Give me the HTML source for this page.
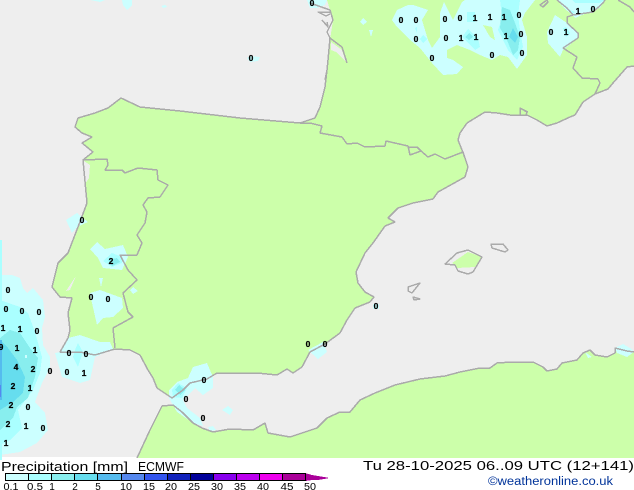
<!DOCTYPE html>
<html>
<head>
<meta charset="utf-8">
<style>
html,body{margin:0;padding:0;background:#fff;width:634px;height:490px;overflow:hidden}
svg{display:block;position:absolute;left:0;top:0}
.d text{font-family:"Liberation Sans",sans-serif;font-size:8.5px;font-weight:bold;fill:#000;text-anchor:middle;stroke:#000;stroke-width:.25px}
.l text{font-family:"Liberation Sans",sans-serif;font-size:10px;fill:#000;text-anchor:middle}
.t{font-family:"Liberation Sans",sans-serif;font-size:12.5px;fill:#000}
</style>
</head>
<body>
<svg width="634" height="490" viewBox="0 0 634 490" xmlns="http://www.w3.org/2000/svg">
<rect x="0" y="0" width="634" height="457" fill="#eeeeee"/>
<g shape-rendering="crispEdges">
<!-- land -->
<path fill="#ccffaa" d="M327 0L634 0L634 66L627 67L620 75L613 83L608 89L595 94L583 102L575 115L570 117L557 123L547 126L537 120L531 117L527 115L520 115L510 115L497 113L485 112L467 123L460 133L458 140L462 150L465 158L468 167L465 177L447 187L438 192L433 199L413 203L398 208L388 218L395 222L385 226L373 243L365 253L356 272L358 283L365 292L374 297L370 302L355 308L347 320L340 333L325 344L310 352L302 367L293 373L287 369L277 375L257 373L240 373L217 373L207 379L190 383L183 390L172 398L163 392L157 388L153 378L148 370L140 355L130 350L115 349L95 355L80 352L60 352L68 338L70 330L68 313L72 298L60 297L52 287L58 263L68 253L78 227L87 203L83 160L93 152L82 143L92 137L82 133L75 127L78 118L95 113L108 108L121 98L140 107L180 111L240 118L300 123L315 118L320 107L325 87L327 70L330 40L333 20L330 10Z"/>
<path fill="#ccffaa" d="M137 458L150 430L162 406L173 405L182 412L193 423L202 428L213 432L230 429L253 430L265 423L268 433L290 437L317 428L327 418L340 412L350 412L360 400L375 393L395 385L420 379L445 376L460 372L480 368L490 368L497 363L512 362L533 362L543 367L547 371L557 369L562 363L577 360L583 353L590 350L595 355L607 357L615 353L615 348L627 351L634 352L634 458Z"/>
<path fill="#ccffaa" d="M452 263L468 252L482 257L475 267L457 268Z"/>
<path fill="#eeeeee" d="M331 42L342 50L346 62L336 52L331 50Z"/>
<path fill="#eeeeee" d="M84 161L90 165L89 178L85 184Z"/>
<path fill="#eeeeee" d="M66 291L76 276L70 290Z"/>

<!-- rain pale -->
<g fill="#ccffff">
<path d="M0 275L12 275L20 278L23 288L27 293L33 288L43 300L45 317L42 328L43 345L50 357L50 368L42 383L35 402L45 413L48 430L37 443L20 452L0 455Z"/>
<path d="M60 352L68 338L80 335L100 342L110 342L113 349L95 357L90 380L80 383L62 377L55 353Z"/>
<path d="M90 293L100 290L122 298L123 308L113 317L103 318L97 325L92 303Z"/>
<path d="M90 249L97 242L105 249L123 245L128 257L122 270L103 268L98 258Z"/>
<path d="M99 278L103 278L101 287Z"/>
<path d="M130 290L133 287L138 291L133 294Z"/>
<path d="M66 220L77 213L88 222L77 227L72 233Z"/>
<path d="M169 390L177 382L188 378L193 367L207 363L213 377L213 388L203 395L195 388L183 400L187 408L200 418L203 426L193 423L177 412L169 398Z"/>
<path d="M222 410L228 406L233 410L230 415Z"/>
<path d="M208 427L213 426L216 430L210 431Z"/>
<path d="M308 350L323 342L327 352L318 359Z"/>
<path d="M392 20L397 10L408 5L413 5L428 10L422 20L428 40L432 48L440 37L440 13L444 2L453 20L462 2L465 0L535 0L525 13L522 20L527 37L527 55L517 69L508 57L500 55L492 60L480 55L470 50L457 45L447 50L447 58L453 60L463 67L457 74L443 75L432 63L420 48L410 40L397 27Z"/>
<path d="M360 22L363 18L367 22L363 25Z"/>
<path d="M369 30L373 30L371 37Z"/>
<path d="M547 32L555 15L567 23L578 32L578 37L572 43L563 50L560 57L548 43Z"/>
<path d="M557 0L563 7L572 15L575 18L587 13L600 8L605 0Z"/>
<path d="M122 0L132 0L132 5L127 10L123 5Z"/>
<path d="M90 0L105 0L100 2Z"/>
<path d="M161 6L165 5L167 7L163 8Z"/>
<path d="M247 58L250 56L260 57L258 61L250 62Z"/>
<path d="M307 0L327 0L325 5L317 8L310 8Z"/>
<path d="M585 352L592 357L588 358Z"/>
<path d="M615 348L623 344L630 348L634 352L627 357L617 353Z"/>
<rect x="373" y="304" width="6" height="5"/>
</g>
<path fill="#ccffaa" d="M483 25L492 27L495 40L490 37Z"/>

<!-- rain level 2 -->
<g fill="#aaffff">
<path d="M0 300L20 307L28 313L35 332L42 357L40 373L33 390L18 410L22 428L10 440L0 445Z"/>
<rect x="0" y="240" width="2" height="220"/>
<path d="M75 350L78 343L83 352L78 367L73 357Z"/>
<path d="M103 261L112 253L122 257L122 263L112 267Z"/>
<path d="M172 390L178 383L187 388L182 398L173 397Z"/>
<path d="M500 0L520 0L518 15L520 30L523 47L517 60L508 50L498 30L502 17Z"/>
<rect x="467" y="12" width="8" height="10"/>
<path d="M462 37L468 29L478 38L480 47L475 50Z"/>
<path d="M420 39L423 35L427 39L423 43Z"/>
<path d="M415 28L417 27L417 33Z"/>
<path d="M563 28L566 27L570 33L566 37Z"/>
<path d="M572 0L605 0L600 3L575 3Z"/>
<path d="M570 10L575 12L572 14Z"/>
</g>
<!-- rain level 3 -->
<g fill="#88eeee">
<path d="M0 338L10 330L20 333L30 348L38 358L35 377L28 398L17 407L13 418L0 430Z"/>
<path d="M108 260L117 258L120 262L112 266Z"/>
<path d="M175 390L179 385L185 390L180 395Z"/>
<path d="M502 7L510 10L515 23L520 37L518 50L513 55L507 40L500 28Z"/>
<path d="M465 37L469 33L473 37L469 40Z"/>
</g>
<!-- rain level 4 -->
<g fill="#66ddee">
<path d="M0 340L8 348L17 360L25 377L23 393L13 402L0 410Z"/>
<path d="M513 28L518 37L515 43L509 37Z"/>
</g>
<rect x="25" y="355" width="2" height="3" fill="#ccffff"/>
<rect x="0" y="340" width="2" height="60" fill="#55bbee"/>
<rect x="0" y="385" width="1" height="12" fill="#5588ee"/>

<!-- coast & borders -->
<g fill="none" stroke="#aaaaaa" stroke-width="1.5" stroke-linejoin="round">
<path d="M634 66L627 67L620 75L613 83L608 89L595 94L583 102L575 115L570 117L557 123L547 126L537 120L531 117L527 115L520 115L520 108L528 112M520 115L510 115L497 113L485 112L467 123L460 133L458 140L462 150L465 158L468 167L465 177L447 187L438 192L433 199L413 203L398 208L388 218L395 222L385 226L373 243L365 253L356 272L358 283L365 292L374 297L370 302L355 308L347 320L340 333L325 344L310 352L302 367L293 373L287 369L277 375L257 373L240 373L217 373L207 379L190 383L183 390L172 398L163 392L157 388L153 378L148 370L140 355L130 350L115 349L95 355L80 352L60 352L68 338L70 330L68 313L72 298L60 297L52 287L58 263L68 253L78 227L87 203L83 160L93 152L82 143L92 137L82 133L75 127L78 118L95 113L108 108L121 98L140 107L180 111L240 118L300 123L315 118L320 107L325 87L327 70L325 80"/>
<path d="M327 70L328 60L330 38L342 47L347 63M330 38L327 32L333 20L330 10L310 3M331 12L318 12L326 16L330 14M322 20L328 27L327 22"/>
<path d="M137 458L150 430L162 406L173 405L182 412L193 423L202 428L213 432L230 429L253 430L265 423L268 433L290 437L317 428L327 418L340 412L350 412L360 400L375 393L395 385L420 379L445 376L460 372L480 368L490 368L497 363L512 362L533 362L543 367L547 371L557 369L562 363L577 360L583 353L590 350L595 355L607 357L615 353L615 348L627 351L634 352"/>
<path d="M445 264L457 253L468 250L482 257L473 272L468 274L458 271L455 265Z"/>
<path d="M491 244L503 244L508 250L505 252L492 248Z"/>
<path d="M408 287L420 283L412 293L408 291Z"/>
<path d="M413 297L420 299L414 300Z"/>
<path d="M83 160L107 159L108 165L105 170L122 170L125 173L138 168L157 170L158 180L168 185L160 197L148 198L143 205L147 212L145 223L137 235L142 243L137 255L120 255L128 270L137 280L123 293L128 312L133 317L113 328L115 348"/>
<path d="M300 123L310 123L322 126L320 133L342 137L347 144L357 143L365 147L385 146L386 141L408 146L410 155L421 151L428 157L435 154L445 159L463 152L465 158"/>
<path d="M409 147L417 147L421 151"/>
<path d="M567 23L578 33L578 38L563 48L577 57L573 68L582 78L598 79L600 83L595 94"/>
<path d="M567 23L567 17L573 15L593 12L603 3L605 0M557 0L567 8L573 15M618 0L630 7L634 12M540 5L547 0L548 2L543 7Z"/>
<path d="M520 108L527 112L526 115"/>
</g>
</g>

<!-- contour labels -->
<g class="d">
<text x="8" y="293">0</text><text x="6" y="312">0</text><text x="22" y="314">0</text><text x="39" y="315">0</text>
<text x="3" y="331">1</text><text x="20" y="332">1</text><text x="37" y="334">0</text><text x="1" y="350">9</text>
<text x="17" y="351">1</text><text x="35" y="353">1</text><text x="16" y="370">4</text><text x="33" y="372">2</text>
<text x="50" y="374">0</text><text x="69" y="356">0</text><text x="86" y="357">0</text><text x="67" y="375">0</text>
<text x="84" y="376">1</text><text x="13" y="389">2</text><text x="30" y="391">1</text><text x="11" y="408">2</text>
<text x="28" y="410">0</text><text x="8" y="427">2</text><text x="26" y="429">1</text><text x="43" y="431">0</text>
<text x="6" y="446">1</text>
<text x="401" y="23">0</text><text x="416" y="23">0</text><text x="445" y="22">0</text><text x="460" y="21">0</text>
<text x="475" y="21">1</text><text x="490" y="20">1</text><text x="504" y="20">1</text><text x="519" y="18">0</text>
<text x="416" y="42">0</text><text x="446" y="41">0</text><text x="461" y="41">1</text><text x="476" y="40">1</text>
<text x="506" y="39">1</text><text x="521" y="37">0</text><text x="551" y="35">0</text><text x="566" y="35">1</text>
<text x="522" y="56">0</text><text x="492" y="58">0</text><text x="432" y="61">0</text><text x="578" y="14">1</text>
<text x="593" y="12">0</text>
<text x="82" y="223">0</text><text x="111" y="264">2</text><text x="91" y="300">0</text><text x="108" y="302">0</text>
<text x="204" y="383">0</text><text x="186" y="402">0</text><text x="203" y="421">0</text>
<text x="308" y="347">0</text><text x="325" y="347">0</text><text x="376" y="309">0</text>
<text x="251" y="61">0</text><text x="312" y="6">0</text>
</g>

<!-- title -->
<text class="t" x="1" y="471" textLength="127" lengthAdjust="spacingAndGlyphs">Precipitation [mm]</text>
<text class="t" x="138" y="471" textLength="46" lengthAdjust="spacingAndGlyphs">ECMWF</text>
<text class="t" x="363" y="470" textLength="271" lengthAdjust="spacingAndGlyphs">Tu 28-10-2025 06..09 UTC (12+141)</text>
<text x="488" y="485" font-family="'Liberation Sans',sans-serif" font-size="11.5" fill="#003399" textLength="125" lengthAdjust="spacingAndGlyphs">©weatheronline.co.uk</text>

<!-- legend bar -->
<g shape-rendering="crispEdges">
<rect x="5" y="473" width="23" height="8" fill="#ccffff"/>
<rect x="28" y="473" width="23" height="8" fill="#aaffff"/>
<rect x="51" y="473" width="23" height="8" fill="#88eeee"/>
<rect x="74" y="473" width="23" height="8" fill="#66ddee"/>
<rect x="97" y="473" width="24" height="8" fill="#55bbee"/>
<rect x="121" y="473" width="23" height="8" fill="#5588ee"/>
<rect x="144" y="473" width="23" height="8" fill="#3355ee"/>
<rect x="167" y="473" width="23" height="8" fill="#1122bb"/>
<rect x="190" y="473" width="23" height="8" fill="#000099"/>
<rect x="213" y="473" width="23" height="8" fill="#8800ee"/>
<rect x="236" y="473" width="23" height="8" fill="#bb00ee"/>
<rect x="259" y="473" width="23" height="8" fill="#ee00ee"/>
<rect x="282" y="473" width="23" height="8" fill="#aa0099"/>
<path fill="#aa0099" d="M305 473L312 475L318 476L324 477L329 478L324 479L318 480L312 480L305 481Z"/>
<path fill="none" stroke="#000" stroke-width="1" d="M5.5 473.5H305.5V480.5H5.5ZM28.5 473.5V480.5M51.5 473.5V480.5M74.5 473.5V480.5M97.5 473.5V480.5M121.5 473.5V480.5M144.5 473.5V480.5M167.5 473.5V480.5M190.5 473.5V480.5M213.5 473.5V480.5M236.5 473.5V480.5M259.5 473.5V480.5M282.5 473.5V480.5"/>
</g>
<g class="l">
<text x="11" y="490" textLength="15" lengthAdjust="spacingAndGlyphs">0.1</text>
<text x="35" y="490" textLength="16" lengthAdjust="spacingAndGlyphs">0.5</text>
<text x="52" y="490">1</text><text x="75" y="490">2</text><text x="98" y="490">5</text>
<text x="126" y="490" textLength="12" lengthAdjust="spacingAndGlyphs">10</text>
<text x="149" y="490" textLength="12" lengthAdjust="spacingAndGlyphs">15</text>
<text x="171" y="490" textLength="12" lengthAdjust="spacingAndGlyphs">20</text>
<text x="194" y="490" textLength="12" lengthAdjust="spacingAndGlyphs">25</text>
<text x="217" y="490" textLength="12" lengthAdjust="spacingAndGlyphs">30</text>
<text x="240" y="490" textLength="12" lengthAdjust="spacingAndGlyphs">35</text>
<text x="263" y="490" textLength="12" lengthAdjust="spacingAndGlyphs">40</text>
<text x="287" y="490" textLength="13" lengthAdjust="spacingAndGlyphs">45</text>
<text x="310" y="490" textLength="12" lengthAdjust="spacingAndGlyphs">50</text>
</g>
</svg>
</body>
</html>
